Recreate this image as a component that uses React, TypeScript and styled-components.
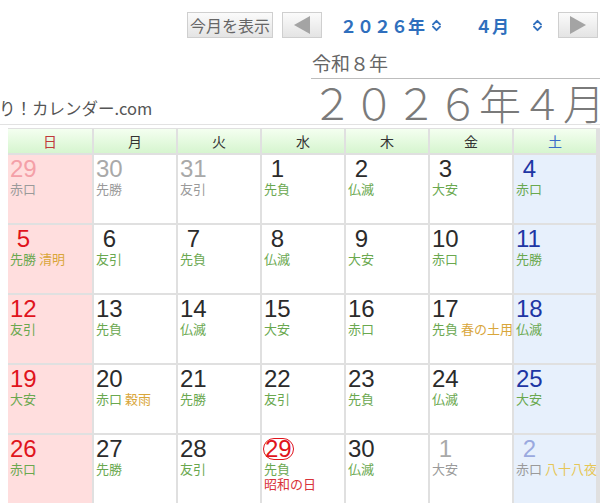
import React from "react";
import styled, { createGlobalStyle, css } from "styled-components";

const Global = createGlobalStyle`
  html, body { margin: 0; padding: 0; background: #fff; }
  body {
    font-family: "Liberation Sans", "Noto Sans CJK JP", sans-serif;
    color: #333;
    width: 600px;
    overflow: hidden;
  }
`;

const JP = `"Noto Sans CJK JP", "Liberation Sans", sans-serif`;

const Page = styled.div`
  width: 600px;
  height: 504px;
  overflow: hidden;
`;

const Toolbar = styled.div`
  display: flex;
  justify-content: flex-end;
  align-items: flex-start;
  gap: 9px;
  padding: 12px 2px 0 0;
  height: 48px;
  box-sizing: border-box;
`;

const GrayButton = styled.div<{ $w: number }>`
  width: ${(p) => p.$w}px;
  height: 26px;
  box-sizing: border-box;
  border: 1px solid #cfcfcf;
  background: linear-gradient(#fbfbfb, #e4e4e4);
  display: flex;
  align-items: center;
  justify-content: center;
  font-family: ${JP};
  font-size: 16px;
  color: #666;
`;

const Select = styled.div<{ $w: number; $pl: number; $pr: number }>`
  width: ${(p) => p.$w}px;
  height: 26px;
  box-sizing: border-box;
  padding: 0 ${(p) => p.$pr}px 0 ${(p) => p.$pl}px;
  display: flex;
  align-items: center;
  justify-content: space-between;
  color: #2f6fbd;
  font-family: "Liberation Serif", "Noto Sans CJK JP", serif;
  font-weight: bold;
  font-size: 17px;
`;

const SelText = styled.span``;

const Header = styled.div`
  display: flex;
  justify-content: space-between;
  align-items: flex-end;
  border-bottom: 1px solid #e2e2e2;
  height: 76px;
`;

const SiteName = styled.div`
  font-family: ${JP};
  font-size: 16.5px;
  color: #555;
  padding-bottom: 4px;
  margin-left: -1px;
  white-space: nowrap;
`;

const TitleBlock = styled.div`
  width: 289px;
  display: flex;
  flex-direction: column;
`;

const Era = styled.div`
  font-family: ${JP};
  font-size: 19px;
  line-height: 30px;
  color: #666;
  padding-left: 1px;
  border-bottom: 1px solid #bdbdbd;
`;

const BigTitle = styled.div`
  font-family: ${JP};
  font-size: 42px;
  line-height: 45px;
  font-weight: 300;
  color: #7a7a7a;
  text-align: right;
  white-space: nowrap;
  margin-right: -3px;
`;

const Table = styled.div`
  margin: 3px 0 0 8px;
  padding: 1px 2px 0 0;
  width: 592px;
  box-sizing: border-box;
  display: grid;
  grid-template-columns: 84px repeat(6, 82px);
  grid-template-rows: 24px repeat(5, 68px);
  gap: 2px;
  background: #e0e0e0;
`;

type Kind = "sun" | "sat" | "week";

const headColor = { sun: "#c0393b", sat: "#3a6cc8", week: "#333" };

const HeadCell = styled.div<{ $kind: Kind }>`
  background: linear-gradient(#f4fff0, #d6f5cf);
  display: flex;
  align-items: center;
  justify-content: center;
  font-family: ${JP};
  font-size: 14px;
  color: ${(p) => headColor[p.$kind]};
`;

const cellBg = { sun: "#ffdede", sat: "#e7f0fc", week: "#fff" };

const Cell = styled.div<{ $kind: Kind }>`
  background: ${(p) => cellBg[p.$kind]};
  padding: 1px 0 0 2px;
  white-space: nowrap;
  position: relative;
  z-index: 0;
`;

const numColor = (kind: Kind, other: boolean) => {
  if (other) return kind === "sun" ? "#f4a0a8" : kind === "sat" ? "#9aa9df" : "#a9a9a9";
  return kind === "sun" ? "#e0141c" : kind === "sat" ? "#1e36a4" : "#2b2b2b";
};

const DayNum = styled.div<{ $color: string; $holiday?: boolean }>`
  font-family: "Liberation Sans", sans-serif;
  font-size: 24px;
  line-height: 26px;
  color: ${(p) => p.$color};
  white-space: pre;
  ${(p) =>
    p.$holiday &&
    css`
      display: inline-block;
      line-height: 20px;
      margin: 2px 0 0 -1px;
      padding: 0 1px;
      border: 1px solid #e0141c;
      border-radius: 11px;
      color: #e0141c;
    `}
`;

const SubLine = styled.div<{ $color: string; $top?: number }>`
  font-family: ${JP};
  font-size: 13px;
  line-height: 14px;
  color: ${(p) => p.$color};
  margin-top: ${(p) => p.$top ?? 0}px;
  position: relative;
  z-index: 1;
`;

const Season = styled.span<{ $light?: boolean }>`
  color: ${(p) => (p.$light ? "#e6c656" : "#d9a63a")};
`;

const HolidayName = styled.div`
  font-family: ${JP};
  font-size: 13px;
  line-height: 16px;
  color: #d9333a;
`;

const Chevrons = () => (
  <svg width="11" height="13" viewBox="0 0 11 13">
    <path d="M2 5.3 L5.5 1.8 L9 5.3 M2 7.7 L5.5 11.2 L9 7.7" fill="none" stroke="#2f6fbd" strokeWidth="1.9" strokeLinecap="round" strokeLinejoin="round" />
  </svg>
);

const Tri = ({ dir }: { dir: "l" | "r" }) => (
  <svg width="18" height="20" viewBox="0 0 18 20">
    {dir === "l" ? (
      <polygon points="17,1 17,19 1,10" fill="#a4a4a4" />
    ) : (
      <polygon points="1,1 1,19 17,10" fill="#a4a4a4" />
    )}
  </svg>
);

type Day = {
  n: string;
  r: string;
  other?: boolean;
  season?: string;
  holiday?: string;
};

const weeks: Day[][] = [
  [
    { n: "29", r: "赤口", other: true },
    { n: "30", r: "先勝", other: true },
    { n: "31", r: "友引", other: true },
    { n: " 1", r: "先負" },
    { n: " 2", r: "仏滅" },
    { n: " 3", r: "大安" },
    { n: " 4", r: "赤口" },
  ],
  [
    { n: " 5", r: "先勝", season: "清明" },
    { n: " 6", r: "友引" },
    { n: " 7", r: "先負" },
    { n: " 8", r: "仏滅" },
    { n: " 9", r: "大安" },
    { n: "10", r: "赤口" },
    { n: "11", r: "先勝" },
  ],
  [
    { n: "12", r: "友引" },
    { n: "13", r: "先負" },
    { n: "14", r: "仏滅" },
    { n: "15", r: "大安" },
    { n: "16", r: "赤口" },
    { n: "17", r: "先負", season: "春の土用" },
    { n: "18", r: "仏滅" },
  ],
  [
    { n: "19", r: "大安" },
    { n: "20", r: "赤口", season: "穀雨" },
    { n: "21", r: "先勝" },
    { n: "22", r: "友引" },
    { n: "23", r: "先負" },
    { n: "24", r: "仏滅" },
    { n: "25", r: "大安" },
  ],
  [
    { n: "26", r: "赤口" },
    { n: "27", r: "先勝" },
    { n: "28", r: "友引" },
    { n: "29", r: "先負", holiday: "昭和の日" },
    { n: "30", r: "仏滅" },
    { n: " 1", r: "大安", other: true },
    { n: " 2", r: "赤口", other: true, season: "八十八夜" },
  ],
];

const heads = ["日", "月", "火", "水", "木", "金", "土"];
const kindOf = (i: number): Kind => (i === 0 ? "sun" : i === 6 ? "sat" : "week");

export default function App() {
  return (
    <Page>
      <Global />
      <Toolbar>
        <GrayButton $w={86}>今月を表示</GrayButton>
        <GrayButton $w={40}>
          <Tri dir="l" />
        </GrayButton>
        <Select $w={121} $pl={9} $pr={10}>
          <SelText>２０２６年</SelText>
          <Chevrons />
        </Select>
        <Select $w={88} $pl={14} $pr={6}>
          <SelText>４月</SelText>
          <Chevrons />
        </Select>
        <GrayButton $w={40}>
          <Tri dir="r" />
        </GrayButton>
      </Toolbar>
      <Header>
        <SiteName>り！カレンダー.com</SiteName>
        <TitleBlock>
          <Era>令和８年</Era>
          <BigTitle>２０２６年４月</BigTitle>
        </TitleBlock>
      </Header>
      <Table>
        {heads.map((h, i) => (
          <HeadCell key={h} $kind={kindOf(i)}>
            {h}
          </HeadCell>
        ))}
        {weeks.flatMap((w, wi) =>
          w.map((d, i) => {
            const kind = kindOf(i);
            return (
              <Cell key={`${wi}-${i}`} $kind={kind}>
                <DayNum $color={numColor(kind, !!d.other)} $holiday={!!d.holiday}>
                  {d.n}
                </DayNum>
                <SubLine $color={d.other ? "#9a9a9a" : "#6aa84f"} $top={d.holiday ? 1 : 0}>
                  {d.r}
                  {d.season && <Season $light={d.other}> {d.season}</Season>}
                </SubLine>
                {d.holiday && <HolidayName>{d.holiday}</HolidayName>}
              </Cell>
            );
          })
        )}
      </Table>
    </Page>
  );
}
